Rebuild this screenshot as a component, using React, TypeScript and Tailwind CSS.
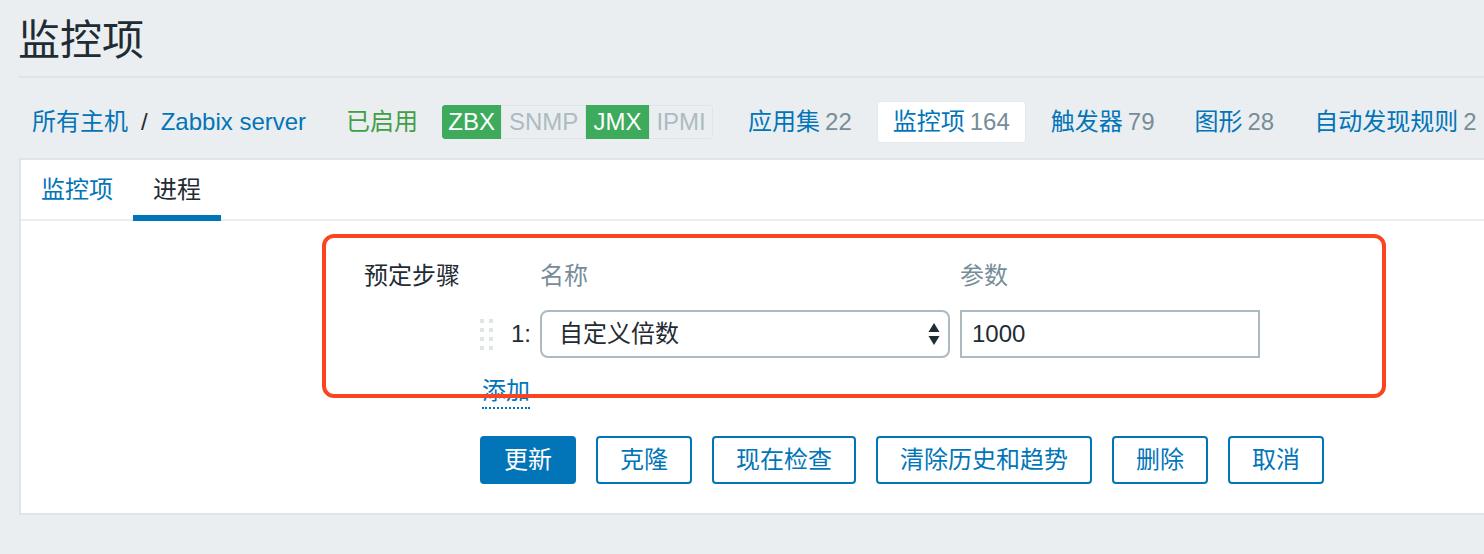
import React from "react";

const Tag = ({ label, on, w }: { label: string; on: boolean; w: string }) => (
  <span
    className={
      "flex h-[34px] shrink-0 items-center justify-center border text-[24px] leading-none " +
      w +
      " " +
      (on
        ? "border-[#3daa5c] bg-[#3daa5c] text-white"
        : "border-[#dfe4e7] bg-[#ebeef0] text-[#acbbc2]")
    }
  >
    {label}
  </span>
);

const NavItem = ({ name, count, active }: { name: string; count: string; active?: boolean }) => (
  <div
    className={
      "flex h-[42px] shrink-0 items-center px-[15px] rounded-[4px] " +
      (active ? "bg-white border border-[#e6e9eb]" : "")
    }
  >
    <span className="text-[#0275b8]">{name}</span>
    <span className="ml-[5px] text-[#768d99]">{count}</span>
  </div>
);

const Btn = ({ label, primary }: { label: string; primary?: boolean }) => (
  <button
    className={
      "h-[48px] shrink-0 rounded-[4px] border-2 border-[#0275b8] px-[22px] text-[24px] leading-none " +
      (primary ? "bg-[#0275b8] text-white" : "bg-white text-[#0275b8]")
    }
  >
    {label}
  </button>
);

export default function App() {
  return (
    <div className="relative min-h-[554px] w-[1484px] overflow-hidden bg-[#ebeef0] font-['Liberation_Sans','Noto_Sans_CJK_SC',sans-serif] text-[24px] text-[#1f2c33]">
      {/* Header */}
      <div className="ml-[18px] flex h-[76px] items-center pt-[6px]">
        <h1 className="text-[42px] leading-none text-[#1f2c33]">监控项</h1>
      </div>
      <div className="ml-[18px] h-[2px] bg-[#dfe4e7]" />

      {/* Breadcrumb / nav */}
      <div className="ml-[18px] flex h-[80px] items-center whitespace-nowrap pl-[14px] pt-[8px]">
        <span className="shrink-0 text-[#0275b8]">所有主机</span>
        <span className="mx-[13px] shrink-0 text-[#1f2c33]">/</span>
        <span className="shrink-0 text-[#0275b8]">Zabbix server</span>
        <span className="ml-[40px] shrink-0 text-[#429e47]">已启用</span>
        <div className="ml-[24px] flex shrink-0 overflow-hidden rounded-[4px]">
          <Tag label="ZBX" on w="w-[59px]" />
          <Tag label="SNMP" on={false} w="w-[85px]" />
          <Tag label="JMX" on w="w-[63px]" />
          <Tag label="IPMI" on={false} w="w-[64px]" />
        </div>
        <div className="ml-[20px] flex shrink-0 gap-[10px]">
          <NavItem name="应用集" count="22" />
          <NavItem name="监控项" count="164" active />
          <NavItem name="触发器" count="79" />
          <NavItem name="图形" count="28" />
          <NavItem name="自动发现规则" count="2" />
        </div>
      </div>

      {/* Panel */}
      <div className="ml-[19px] border-2 border-r-0 border-[#dfe4e7] bg-white">
        {/* Tabs */}
        <div className="flex h-[61px] border-b-2 border-[#ebeef0]">
          <div className="flex items-center px-[20px] text-[#0275b8]">监控项</div>
          <div className="relative flex w-[88px] items-center justify-center text-[#1f2c33]">
            进程
            <div className="absolute bottom-[-2px] left-0 right-0 h-[6px] bg-[#0275b8]" />
          </div>
        </div>

        {/* Form */}
        <div className="pb-[29px] pt-[37px]">
          <div className="flex h-[36px] items-center">
            <div className="w-[459px] shrink-0 pr-[20px] text-right text-[#1f2c33]">预定步骤</div>
            <div className="ml-[60px] w-[420px] shrink-0 text-[#768d99]">名称</div>
            <div className="text-[#768d99]">参数</div>
          </div>

          <div className="mt-[16px] flex h-[48px] items-center">
            <div className="w-[459px] shrink-0" />
            <div className="grid w-[12px] shrink-0 grid-cols-2 gap-x-[5px] gap-y-[5px]">
              {Array.from({ length: 8 }).map((_, i) => (
                <div key={i} className="h-[4px] w-[4px] bg-[#dfe4e7]" />
              ))}
            </div>
            <div className="ml-[19px] w-[29px] shrink-0 text-[#1f2c33]">1:</div>
            <div className="flex h-[48px] w-[410px] shrink-0 items-center justify-between rounded-[8px] border-2 border-[#acbbc2] pl-[17px] pr-[8px]">
              <span>自定义倍数</span>
              <svg width="12" height="26" viewBox="0 0 12 26">
                <path d="M6 2 L11.5 11 L0.5 11 Z" fill="#1f2c33" />
                <path d="M0.5 15 L11.5 15 L6 24 Z" fill="#1f2c33" />
              </svg>
            </div>
            <div className="ml-[10px] flex h-[48px] w-[300px] shrink-0 items-center border-2 border-[#acbbc2] px-[10px]">
              1000
            </div>
          </div>

          <div className="mt-[14px] flex h-[36px] items-center">
            <div className="w-[461px] shrink-0" />
            <span className="mt-[4px] border-b-2 border-dotted border-[#0275b8] leading-[32px] text-[#0275b8]">添加</span>
          </div>

          <div className="mt-[28px] flex gap-[20px] pl-[459px]">
            <Btn label="更新" primary />
            <Btn label="克隆" />
            <Btn label="现在检查" />
            <Btn label="清除历史和趋势" />
            <Btn label="删除" />
            <Btn label="取消" />
          </div>
        </div>
      </div>

      {/* Red annotation */}
      <div className="pointer-events-none absolute left-[322px] top-[234px] h-[164px] w-[1064px] rounded-[12px] border-4 border-[#fb4420]" />
    </div>
  );
}
